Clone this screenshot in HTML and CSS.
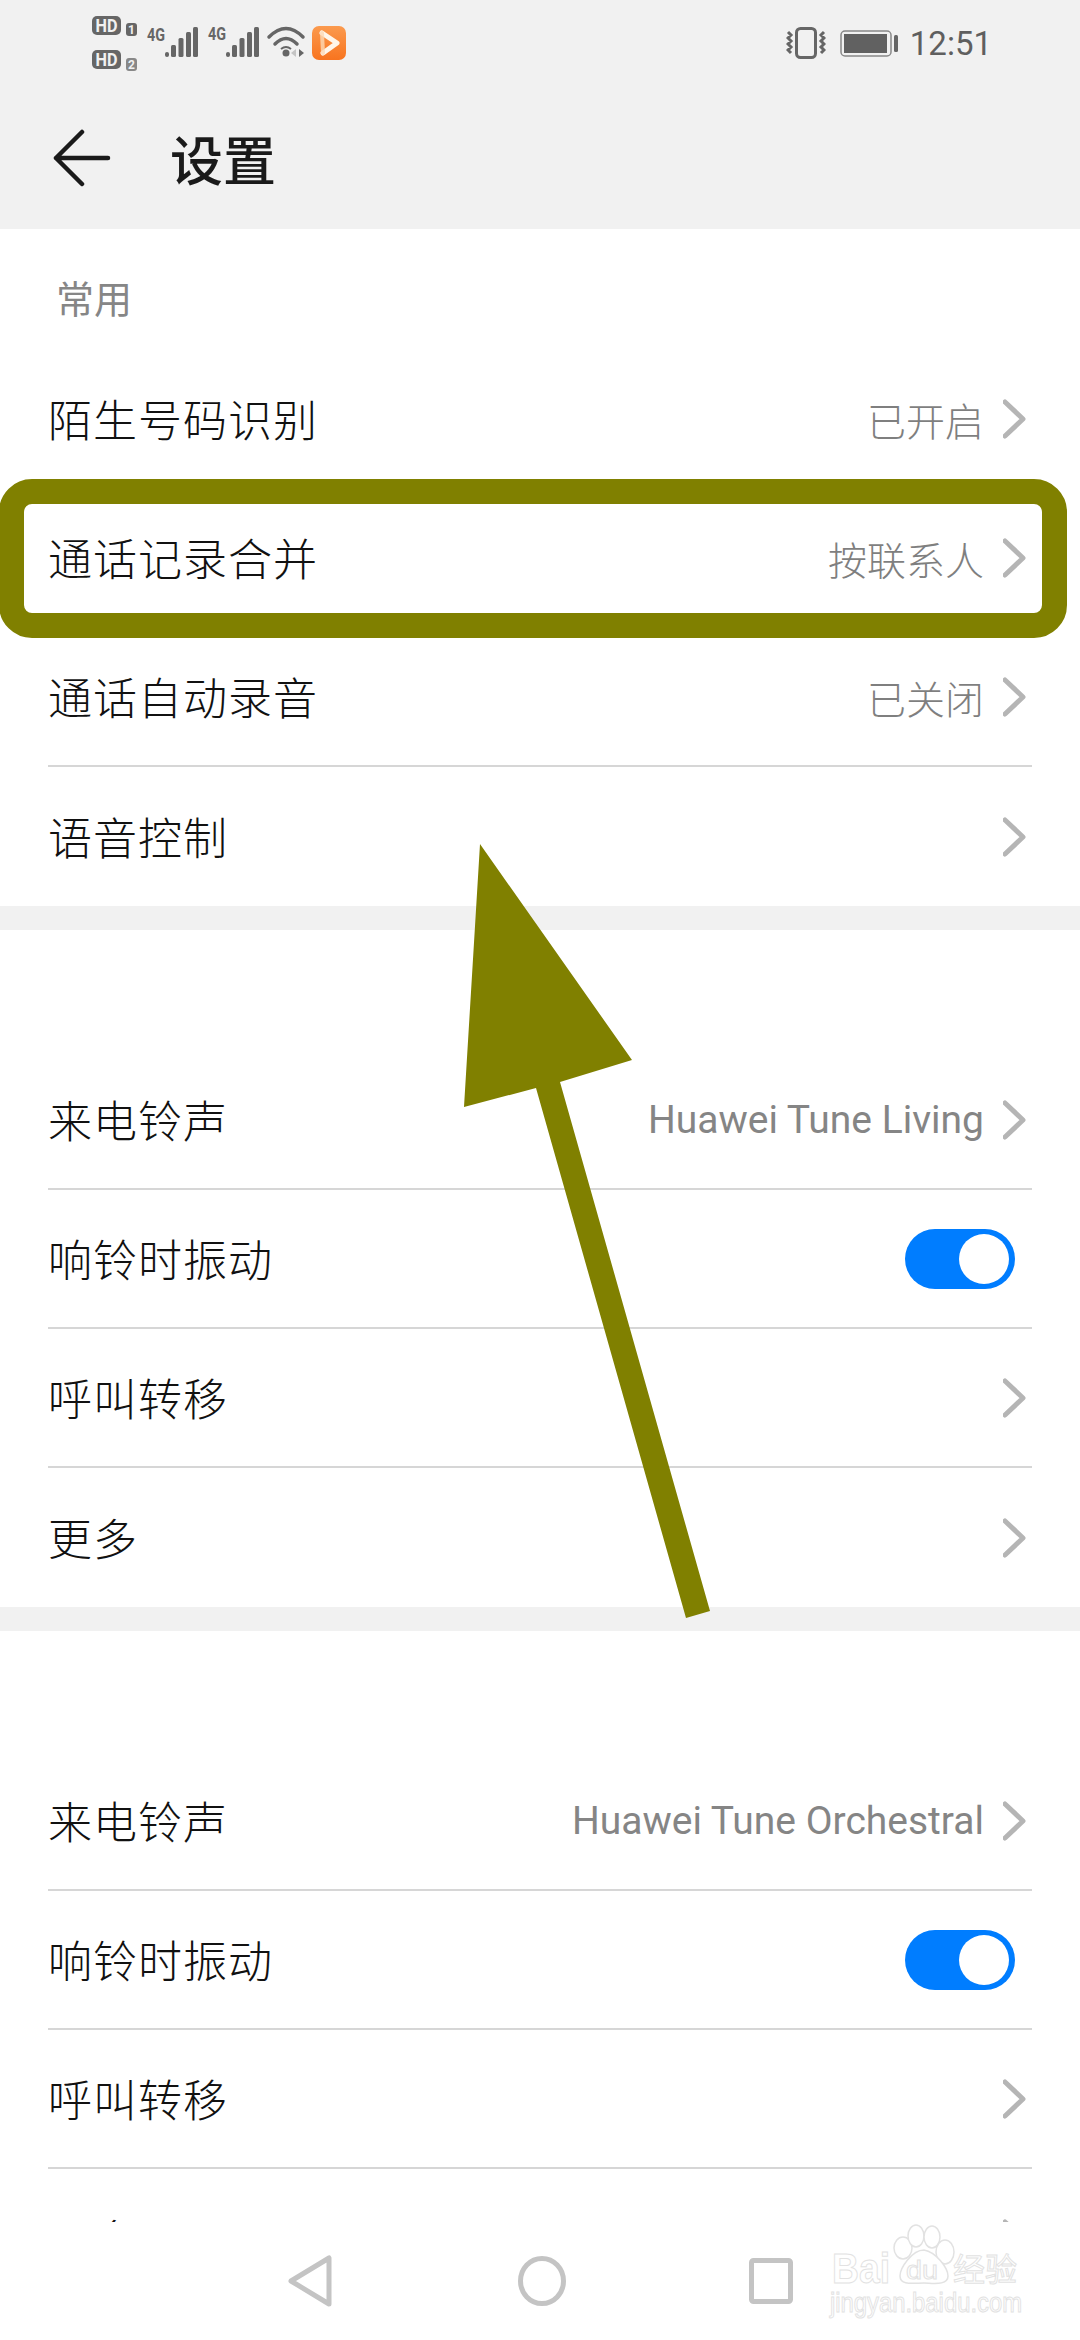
FILE: index.html
```html
<!DOCTYPE html>
<html>
<head>
<meta http-equiv="Content-Type" content="text/html; charset=utf-8"/>
<title>设置</title>
<link rel="stylesheet" href="styles.css">
</head>
<body>
<div class="phone">

  <div class="statusbar">
    <svg class="status-left" width="256" height="60" viewBox="92 14 256 60">
      <defs>
        <linearGradient id="appfill" x1="0" y1="0" x2="0" y2="1">
          <stop offset="0" stop-color="#fb9a4e"/>
          <stop offset="1" stop-color="#f8741f"/>
        </linearGradient>
      </defs>
      <!-- sim cards -->
      <rect x="92" y="16" width="29" height="19" rx="5" fill="#666"/>
      <text x="106.500" y="32" class="hd" textLength="22" lengthAdjust="spacingAndGlyphs">HD</text>
      <rect x="126" y="23" width="11" height="13" rx="3" fill="#666"/>
      <text x="131.500" y="34" class="sim">1</text>
      <rect x="92" y="50" width="29" height="19" rx="5" fill="#666"/>
      <text x="106.500" y="66" class="hd" textLength="22" lengthAdjust="spacingAndGlyphs">HD</text>
      <rect x="126" y="58" width="11" height="13" rx="3" fill="#888"/>
      <text x="131.500" y="69" class="sim">2</text>
      <!-- signal 1 -->
      <text x="156" y="41" class="net" textLength="18" lengthAdjust="spacingAndGlyphs">4G</text>
      <g fill="#666">
        <rect x="165" y="52" width="4" height="5" rx="2"/>
        <rect x="171" y="45" width="5" height="12" rx="1.500"/>
        <rect x="178.500" y="38" width="5" height="19" rx="1.500"/>
        <rect x="186" y="32" width="5" height="25" rx="1.500"/>
        <rect x="193" y="27" width="5" height="30" rx="1.500"/>
      </g>
      <!-- signal 2 -->
      <text x="217" y="40" class="net" textLength="18" lengthAdjust="spacingAndGlyphs">4G</text>
      <g fill="#666">
        <rect x="226" y="52" width="4" height="5" rx="2"/>
        <rect x="232" y="45" width="5" height="12" rx="1.500"/>
        <rect x="239.500" y="38" width="5" height="19" rx="1.500"/>
        <rect x="247" y="32" width="5" height="25" rx="1.500"/>
        <rect x="254" y="27" width="5" height="30" rx="1.500"/>
      </g>
      <!-- wifi -->
      <g fill="none" stroke="#666" stroke-width="3.500" stroke-linecap="round">
        <path d="M269 37 Q286 20 303 37"/>
        <path d="M275 44 Q286 33 297 44"/>
      </g>
      <circle cx="286" cy="53" r="3.500" fill="#666"/>
      <path d="M281 49 Q286 45 291 49" fill="none" stroke="#666" stroke-width="2"/>
      <path d="M296 49v8l-5-4z" fill="#c4c4c4"/>
      <path d="M299 49v8l5-4z" fill="#666"/>
      <!-- video app -->
      <rect x="312" y="26" width="34" height="34" rx="7" fill="url(#appfill)"/>
      <path d="M322 33 L337 43 L323 53" fill="none" stroke="#fff6ea" stroke-width="5" stroke-linejoin="round" stroke-linecap="round"/>
      <path d="M322 33 L323 53" fill="none" stroke="#fdd9b5" stroke-width="4" stroke-linecap="round" opacity="0.8"/>
    </svg>
    <div class="status-right">
      <svg class="vibrate" width="40" height="32" viewBox="0 0 40 32">
        <rect x="10.500" y="1.500" width="19" height="29" rx="4" fill="none" stroke="#666" stroke-width="3"/>
        <path d="M2 5l3 3-3 3 3 3-3 3 3 3-3 3 3 3M38 5l-3 3 3 3-3 3 3 3-3 3 3 3-3 3" fill="none" stroke="#666" stroke-width="3"/>
      </svg>
      <svg width="58" height="27" viewBox="0 0 58 27">
        <rect x="1" y="1" width="50" height="25" rx="4" fill="none" stroke="#888" stroke-width="1.500"/>
        <rect x="4" y="4" width="43" height="19" fill="#616161"/>
        <rect x="54" y="5" width="4" height="17" rx="1.500" fill="#666"/>
      </svg>
      <span class="clock">12:51</span>
    </div>
  </div>

  <div class="titlebar">
    <svg class="back" width="60" height="58" viewBox="0 0 60 58">
      <path d="M29 3 L3 29 L29 55 M3 29 H55" fill="none" stroke="#1a1a1a" stroke-width="4.500" stroke-linecap="round" stroke-linejoin="round"/>
    </svg>
    <span class="title">设置</span>
  </div>

  <div class="content">
    <div class="section">
      <div class="section-head">常用</div>
      <div class="row"><span class="name">陌生号码识别</span><span class="value">已开启</span><svg class="chev" width="24" height="40" viewBox="0 0 24 40"><path d="M2 3 L20 20 L2 37"/></svg></div>
      <div class="row"><span class="name">通话记录合并</span><span class="value">按联系人</span><svg class="chev" width="24" height="40" viewBox="0 0 24 40"><path d="M2 3 L20 20 L2 37"/></svg></div>
      <div class="row"><span class="name">通话自动录音</span><span class="value">已关闭</span><svg class="chev" width="24" height="40" viewBox="0 0 24 40"><path d="M2 3 L20 20 L2 37"/></svg></div>
      <div class="row"><span class="name">语音控制</span><svg class="chev" width="24" height="40" viewBox="0 0 24 40"><path d="M2 3 L20 20 L2 37"/></svg></div>
    </div>

    <div class="section spaced">
      <div class="row"><span class="name">来电铃声</span><span class="value latin">Huawei Tune Living</span><svg class="chev" width="24" height="40" viewBox="0 0 24 40"><path d="M2 3 L20 20 L2 37"/></svg></div>
      <div class="row"><span class="name">响铃时振动</span><span class="switch"><i></i></span></div>
      <div class="row"><span class="name">呼叫转移</span><svg class="chev" width="24" height="40" viewBox="0 0 24 40"><path d="M2 3 L20 20 L2 37"/></svg></div>
      <div class="row"><span class="name">更多</span><svg class="chev" width="24" height="40" viewBox="0 0 24 40"><path d="M2 3 L20 20 L2 37"/></svg></div>
    </div>

    <div class="section spaced">
      <div class="row"><span class="name">来电铃声</span><span class="value latin">Huawei Tune Orchestral</span><svg class="chev" width="24" height="40" viewBox="0 0 24 40"><path d="M2 3 L20 20 L2 37"/></svg></div>
      <div class="row"><span class="name">响铃时振动</span><span class="switch"><i></i></span></div>
      <div class="row"><span class="name">呼叫转移</span><svg class="chev" width="24" height="40" viewBox="0 0 24 40"><path d="M2 3 L20 20 L2 37"/></svg></div>
      <div class="row"><span class="name">更多</span><svg class="chev" width="24" height="40" viewBox="0 0 24 40"><path d="M2 3 L20 20 L2 37"/></svg></div>
    </div>
  </div>

  <div class="navbar">
    <svg width="44" height="52" viewBox="0 0 44 52">
      <path d="M41 3 L41 49 L3 26 Z" class="nav-icon"/>
    </svg>
    <svg width="48" height="50" viewBox="0 0 48 50">
      <ellipse cx="24" cy="25" rx="21.500" ry="22.500" class="nav-icon"/>
    </svg>
    <svg class="nav-last" width="44" height="46" viewBox="0 0 44 46">
      <rect x="2.500" y="2.500" width="39" height="41" rx="2" class="nav-icon"/>
    </svg>
  </div>

  <!-- pen marks added on top of the screenshot -->
  <div class="mark-box"></div>
  <svg class="mark-arrow" width="1080" height="2340" viewBox="0 0 1080 2340">
    <polygon points="480,844 632,1060 560,1082 710,1611 686,1618 536,1088 464,1107"/>
  </svg>

  <svg class="watermark" width="210" height="105" viewBox="0 0 210 105">
    <g class="wm-paw">
      <ellipse cx="83" cy="28" rx="9" ry="11"/>
      <ellipse cx="96" cy="16" rx="8" ry="11"/>
      <ellipse cx="112" cy="17" rx="8" ry="11"/>
      <ellipse cx="125" cy="32" rx="9" ry="12"/>
      <path d="M104 30 C116 32 128 48 128 56 C128 66 112 63 104 63 C94 63 80 66 80 56 C80 48 92 30 104 30 Z"/>
    </g>
    <text x="12" y="63" class="wm-bai" textLength="58" lengthAdjust="spacingAndGlyphs">Bai</text>
    <text x="86" y="59" class="wm-du" textLength="32" lengthAdjust="spacingAndGlyphs">du</text>
    <text x="133" y="61" class="wm-cn" textLength="64" lengthAdjust="spacingAndGlyphs">经验</text>
    <text x="10" y="92" class="wm-url" textLength="192" lengthAdjust="spacingAndGlyphs">jingyan.baidu.com</text>
  </svg>

</div>
</body>
</html>
```

FILE: styles.css
```css
html, body {
  margin: 0;
  padding: 0;
  background: white;
}

.phone {
  position: relative;
  width: 1080px;
  height: 2340px;
  overflow: hidden;
  display: flex;
  flex-direction: column;
  background: #f1f1f1;
  font-family: "Noto Sans CJK SC", Roboto, sans-serif;
}

/* status bar */
.statusbar {
  height: 82px;
  flex: none;
  display: flex;
  justify-content: space-between;
  align-items: flex-start;
  padding: 14px 88px 0 92px;
  box-sizing: border-box;
}
.status-left text {
  font-family: Roboto, sans-serif;
  font-weight: 700;
  text-anchor: middle;
}
.hd {
  font-size: 19px;
  fill: #f1f1f1;
}
.sim {
  font-size: 12px;
  fill: #f1f1f1;
}
.net {
  font-size: 19px;
  fill: #666;
}
.status-right {
  display: flex;
  align-items: center;
  gap: 12px;
  height: 48px;
  margin-top: 5px;
}
.vibrate {
  margin-right: 2px;
}
.clock {
  font-family: Roboto, sans-serif;
  font-size: 33px;
  color: #5f5f5f;
}

/* title */
.titlebar {
  height: 147px;
  flex: none;
  display: flex;
  align-items: center;
  padding-left: 53px;
  padding-top: 4px;
  box-sizing: border-box;
}
.back {
  margin-right: 57px;
}
.title {
  font-size: 53px;
  font-weight: 500;
  color: #1a1a1a;
}

/* list */
.content {
  flex: 1;
  min-height: 0;
  overflow: hidden;
}
.section {
  background: white;
  padding: 0 48px;
}
.spaced {
  margin-top: 24px;
  padding-top: 121px;
}
.section-head {
  height: 121px;
  padding: 43px 0 0 8px;
  box-sizing: border-box;
  font-size: 38px;
  line-height: 50px;
  color: #868686;
}
.row {
  height: 139px;
  box-sizing: border-box;
  display: flex;
  align-items: center;
  border-bottom: 2px solid #d6d6d6;
}
.row:last-child {
  border-bottom: none;
}
.name {
  flex: 1;
  padding-bottom: 2px;
  font-size: 44px;
  font-weight: 300;
  letter-spacing: 1px;
  color: #111;
}
.value {
  font-family: Roboto, "Noto Sans CJK SC", sans-serif;
  font-size: 39px;
  font-weight: 300;
  color: #7f7f7f;
  margin-right: 19px;
}
.latin {
  font-weight: 400;
  color: #858585;
}
.chev {
  margin-right: 5px;
}
.chev path {
  fill: none;
  stroke: #b5b5b5;
  stroke-width: 5;
  stroke-linecap: round;
  stroke-linejoin: round;
}
.switch {
  width: 110px;
  height: 60px;
  margin: 1px 17px 0 0;
  border-radius: 30px;
  background: #007dff;
  display: flex;
  justify-content: flex-end;
  align-items: center;
  padding-right: 6px;
  box-sizing: border-box;
}
.switch i {
  width: 50px;
  height: 50px;
  border-radius: 50%;
  background: white;
}

/* nav bar */
.navbar {
  height: 118px;
  flex: none;
  background: white;
  position: relative;
  display: flex;
  align-items: center;
  justify-content: center;
  gap: 186px;
}
.nav-last {
  margin-left: -3px;
}
.nav-icon {
  fill: none;
  stroke: #c4c4c4;
  stroke-width: 5;
  stroke-linejoin: round;
}

/* annotations */
.mark-box {
  position: absolute;
  left: -1px;
  top: 479px;
  width: 1068px;
  height: 159px;
  box-sizing: border-box;
  border: 25px solid #808000;
  border-radius: 33px;
}
.mark-arrow {
  position: absolute;
  left: 0;
  top: 0;
}
.mark-arrow polygon {
  fill: #808000;
}

/* watermark */
.watermark {
  position: absolute;
  left: 820px;
  top: 2220px;
}
.watermark text {
  fill: white;
  stroke: #e2e2e2;
  stroke-width: 1;
  font-family: "Liberation Sans", sans-serif;
}
.watermark .wm-bai {
  font-size: 42px;
  font-weight: 700;
}
.wm-du {
  font-size: 26px;
}
.watermark .wm-cn {
  font-family: "Noto Sans CJK SC", sans-serif;
  font-size: 32px;
}
.wm-url {
  font-size: 27px;
}
.wm-paw {
  fill: white;
  stroke: #e2e2e2;
  stroke-width: 1.500;
}
```
